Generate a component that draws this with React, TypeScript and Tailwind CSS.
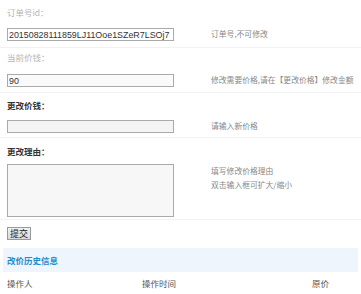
export default function App() {
  const cjk = { fontFamily: '"Noto Sans CJK SC", "Noto Sans", sans-serif' };
  const mono = { fontFamily: '"Liberation Sans", Arial, sans-serif' };

  return (
    <div className="w-[361px] h-[294px] bg-white overflow-hidden text-[8.5px] leading-[12px]" style={cjk}>
      {/* 订单号 */}
      <div className="flex border-b border-[#f2f2f2] pt-[6px] pb-[6px]">
        <div className="w-[211px] shrink-0 pl-[7px]">
          <div className="text-[#b5b5b5] h-[12px]">订单号id：</div>
          <input
            readOnly
            value="20150828111859LJ11Ooe1SZeR7LSOj7"
            className="mt-[10px] block w-[167px] h-[13px] border border-[#aaa] bg-white pl-[1px] pr-0 text-[8.9px] text-[#333] outline-none"
            style={mono}
          />
        </div>
        <div className="pt-[22px] text-[7.8px] text-[#888]">订单号,不可修改</div>
      </div>

      {/* 当前价钱 */}
      <div className="flex border-b border-[#f2f2f2] pt-[3px] pb-[5px]">
        <div className="w-[211px] shrink-0 pl-[7px]">
          <div className="text-[#b5b5b5] h-[12px]">当前价钱：</div>
          <input
            readOnly
            value="90"
            className="mt-[11px] block w-[167px] h-[13px] border border-[#aaa] bg-[#fafafa] pl-[1px] text-[8.9px] text-[#333] outline-none"
            style={mono}
          />
        </div>
        <div className="pt-[23px] text-[7.8px] text-[#888] whitespace-nowrap">修改需要价格,请在【更改价格】修改金额</div>
      </div>

      {/* 更改价钱 */}
      <div className="flex border-b border-[#f2f2f2] pt-[6px] pb-[4px]">
        <div className="w-[211px] shrink-0 pl-[7px]">
          <div className="text-[#333] font-bold h-[12px]">更改价钱：</div>
          <input className="mt-[9px] block w-[167px] h-[13px] border border-[#aaa] bg-[#f4f4f4] outline-none" />
        </div>
        <div className="pt-[21px] text-[7.8px] text-[#888]">请输入新价格</div>
      </div>

      {/* 更改理由 */}
      <div className="flex border-b border-[#f2f2f2] pt-[7px] pb-[2px]">
        <div className="w-[211px] shrink-0 pl-[7px]">
          <div className="text-[#333] font-bold h-[12px]">更改理由：</div>
          <textarea className="mt-[7px] block w-[167px] h-[53px] border border-[#aaa] bg-[#f7f7f7] outline-none resize-none" />
        </div>
        <div className="pt-[19px] text-[7.8px] text-[#888] leading-[14px]">
          <div>填写修改价格理由</div>
          <div>双击输入框可扩大/缩小</div>
        </div>
      </div>

      {/* 提交 */}
      <div className="pl-[7px] pt-[7px]">
        <button className="h-[13px] w-[24px] flex items-center justify-center border border-[#999] bg-gradient-to-b from-[#f2f2f2] to-[#d8d8d8] text-[9px] text-[#222] leading-none">
          提交
        </button>
      </div>

      {/* 改价历史信息 */}
      <div className="mt-[8px] mx-[3px] h-[24px] bg-[#eef5fc] flex items-center pl-[4px]">
        <span className="font-bold text-[#1e8ccc]">改价历史信息</span>
      </div>

      <div className="flex pt-[5px] text-[#555]">
        <div className="w-[142px] pl-[7px]">操作人</div>
        <div className="w-[170px]">操作时间</div>
        <div>原价</div>
      </div>
    </div>
  );
}
